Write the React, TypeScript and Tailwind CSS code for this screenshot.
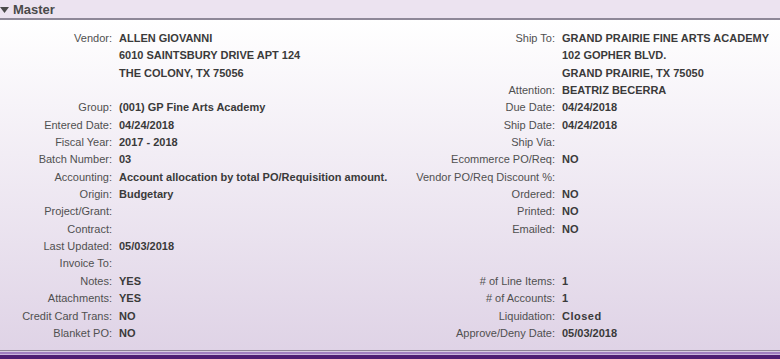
const left: [string, string][] = [
  ["Vendor:", "ALLEN GIOVANNI"],
  ["", "6010 SAINTSBURY DRIVE APT 124"],
  ["", "THE COLONY, TX 75056"],
  ["", ""],
  ["Group:", "(001) GP Fine Arts Academy"],
  ["Entered Date:", "04/24/2018"],
  ["Fiscal Year:", "2017 - 2018"],
  ["Batch Number:", "03"],
  ["Accounting:", "Account allocation by total PO/Requisition amount."],
  ["Origin:", "Budgetary"],
  ["Project/Grant:", ""],
  ["Contract:", ""],
  ["Last Updated:", "05/03/2018"],
  ["Invoice To:", ""],
  ["Notes:", "YES"],
  ["Attachments:", "YES"],
  ["Credit Card Trans:", "NO"],
  ["Blanket PO:", "NO"],
];

const right: [string, string][] = [
  ["Ship To:", "GRAND PRAIRIE FINE ARTS ACADEMY"],
  ["", "102 GOPHER BLVD."],
  ["", "GRAND PRAIRIE, TX 75050"],
  ["Attention:", "BEATRIZ BECERRA"],
  ["Due Date:", "04/24/2018"],
  ["Ship Date:", "04/24/2018"],
  ["Ship Via:", ""],
  ["Ecommerce PO/Req:", "NO"],
  ["Vendor PO/Req Discount %:", ""],
  ["Ordered:", "NO"],
  ["Printed:", "NO"],
  ["Emailed:", "NO"],
  ["", ""],
  ["", ""],
  ["# of Line Items:", "1"],
  ["# of Accounts:", "1"],
  ["Liquidation:", "Closed"],
  ["Approve/Deny Date:", "05/03/2018"],
];

export default function App() {
  return (
    <div className="w-[780px] h-[359px] overflow-hidden flex flex-col font-['Liberation_Sans',Arial,sans-serif] bg-white">
      <div className="h-[18px] bg-[#ece3f0] flex items-center shrink-0">
        <svg width="9" height="6" viewBox="0 0 9 6" className="mt-[1px]">
          <polygon points="0,0 9,0 4.5,6" fill="#4a4a4a" />
        </svg>
        <span className="ml-[4px] text-[13px] font-bold text-[#4a4a4a] leading-none">Master</span>
      </div>
      <div className="h-[2px] bg-[#8e8898] shrink-0" />
      <div className="flex-1 bg-gradient-to-b from-white to-[#dfd3e6] pt-[10px]">
        <div className="grid grid-cols-[112px_290px_139px_1fr] gap-x-[7px] text-[11px] leading-[17.35px]">
          {left.map((l, i) => (
            <div key={i} className="contents">
              <div className="text-right text-[#505050] whitespace-nowrap h-[17.35px]">{l[0]}</div>
              <div className="font-bold text-[#3a3a3a] whitespace-nowrap h-[17.35px]">{l[1]}</div>
              <div className="text-right text-[#505050] whitespace-nowrap h-[17.35px]">{right[i][0]}</div>
              <div className={`whitespace-nowrap h-[17.35px] text-[#3a3a3a] font-bold ${right[i][1] === "Closed" ? "tracking-[0.5px]" : ""}`}>{right[i][1]}</div>
            </div>
          ))}
        </div>
      </div>
      <div className="h-[1px] bg-[#8b8494] shrink-0" />
      <div className="h-[1px] bg-[#d6cce0] shrink-0" />
      <div className="h-[2px] bg-[#9f7fc0] shrink-0" />
      <div className="h-[1px] bg-[#c9b6dc] shrink-0" />
      <div className="h-[4px] bg-[#4d1f73] shrink-0" />
    </div>
  );
}
